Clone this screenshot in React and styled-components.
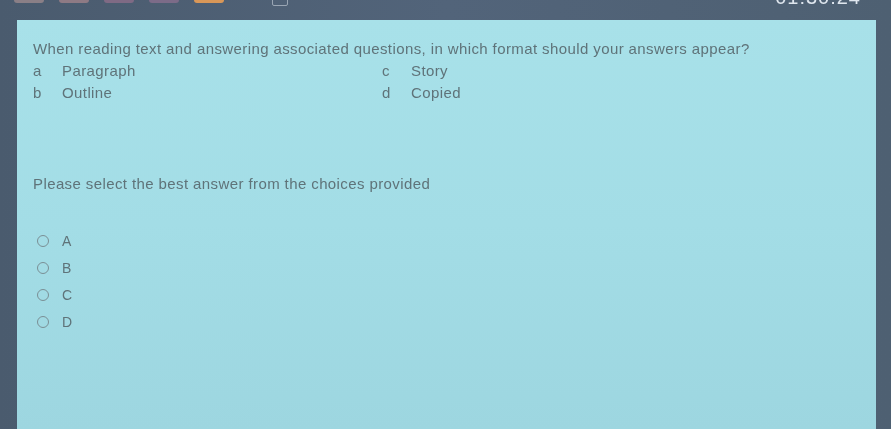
import React from "react";
import styled, { createGlobalStyle } from "styled-components";

const Global = createGlobalStyle`
  html, body { margin: 0; padding: 0; background: #4c5e70; }
  body { font-family: "Liberation Sans", Arial, sans-serif; }
`;

const Screen = styled.div`
  width: 891px;
  height: 429px;
  overflow: hidden;
  background: linear-gradient(90deg, #4a5b6e 0%, #52647a 50%, #4e6072 100%);
  display: flex;
  flex-direction: column;
`;

const TopBar = styled.div`
  height: 20px;
  flex: none;
  position: relative;
  display: flex;
  align-items: flex-start;
  padding-left: 14px;
  gap: 15px;
`;

const Tab = styled.div`
  width: 30px;
  height: 3px;
  border-radius: 0 0 3px 3px;
  background: ${(p) => p.$c};
`;

const CenterMark = styled.div`
  position: absolute;
  left: 272px;
  top: -4px;
  width: 14px;
  height: 8px;
  border: 1px solid #9aa6b4;
  border-radius: 2px;
`;

const Timer = styled.div`
  position: absolute;
  right: 30px;
  top: -14px;
  font-size: 20px;
  color: #dfe6ee;
  letter-spacing: 1px;
  filter: blur(0.6px);
`;

const Panel = styled.div`
  margin-left: 17px;
  width: 859px;
  flex: 1;
  background: linear-gradient(180deg, #a8e1e9 0%, #a3dde6 50%, #9dd6e0 100%);
  padding: 19px 0 0 16px;
  box-sizing: border-box;
  color: #5f7379;
  font-size: 15px;
  letter-spacing: 0.4px;
  filter: blur(0.5px);
`;

const Question = styled.div`
  line-height: 20px;
`;

const Choices = styled.div`
  display: grid;
  grid-template-columns: 349px 200px;
  row-gap: 2px;
  margin-top: 2px;
`;

const Choice = styled.div`
  display: flex;
  line-height: 20px;
`;

const Letter = styled.span`
  width: 29px;
  flex: none;
`;

const Prompt = styled.div`
  margin-top: 71px;
  line-height: 20px;
`;

const Radios = styled.div`
  display: flex;
  flex-direction: column;
  gap: 7px;
  margin-top: 37px;
  padding-left: 4px;
`;

const RadioRow = styled.label`
  display: flex;
  align-items: center;
  height: 20px;
  font-size: 14px;
  letter-spacing: 0;
`;

const Circle = styled.span`
  width: 10px;
  height: 10px;
  border: 1.5px solid #7a8f95;
  border-radius: 50%;
  margin-right: 13px;
`;

const choices = [
  ["a", "Paragraph"],
  ["c", "Story"],
  ["b", "Outline"],
  ["d", "Copied"],
];

export default function App() {
  return (
    <Screen>
      <Global />
      <TopBar>
        <Tab $c="#8a7f86" />
        <Tab $c="#8e7a84" />
        <Tab $c="#7f6a84" />
        <Tab $c="#7c6b88" />
        <Tab $c="#d99758" />
        <CenterMark />
        <Timer>01:30:24</Timer>
      </TopBar>
      <Panel>
        <Question>
          When reading text and answering associated questions, in which format should your answers appear?
        </Question>
        <Choices>
          {choices.map(([l, t]) => (
            <Choice key={l}>
              <Letter>{l}</Letter>
              <span>{t}</span>
            </Choice>
          ))}
        </Choices>
        <Prompt>Please select the best answer from the choices provided</Prompt>
        <Radios>
          {["A", "B", "C", "D"].map((x) => (
            <RadioRow key={x}>
              <Circle />
              {x}
            </RadioRow>
          ))}
        </Radios>
      </Panel>
    </Screen>
  );
}
